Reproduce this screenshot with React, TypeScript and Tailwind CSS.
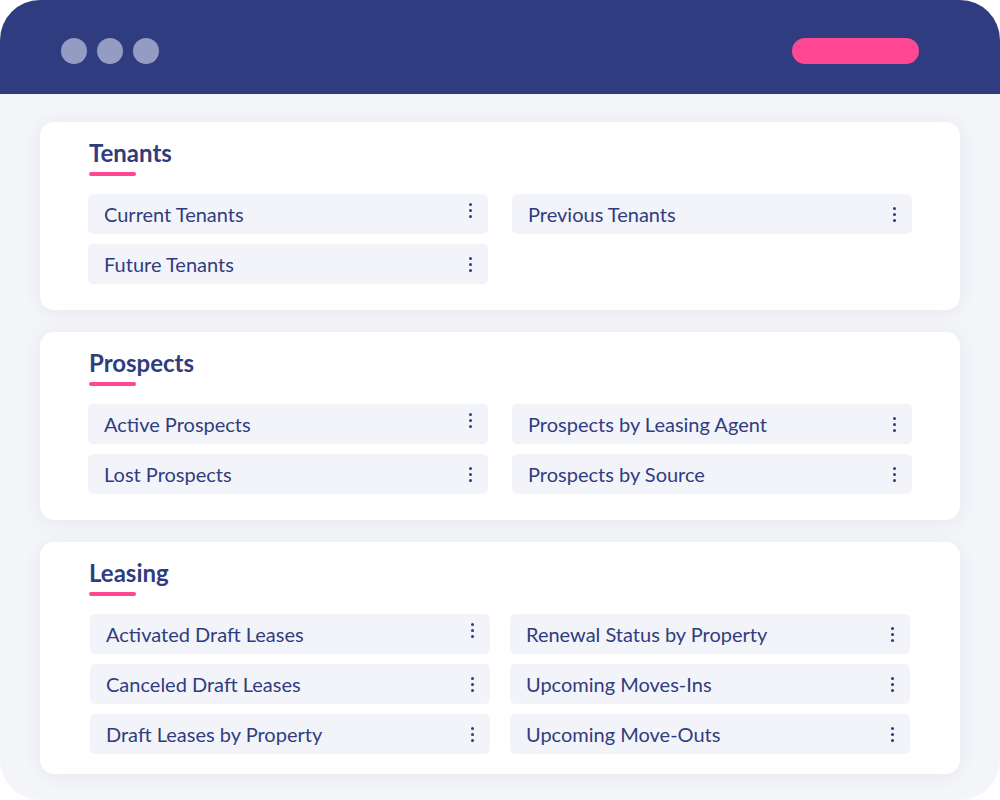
import React from "react";

type Item = { label: string; raised?: boolean };

function Kebab({ raised }: { raised?: boolean }) {
  return (
    <div className={`flex flex-col items-center gap-[3px] ${raised ? "-translate-y-[4px]" : ""}`}>
      <span className="block w-[3px] h-[3px] rounded-full bg-[#2f3d80]" />
      <span className="block w-[3px] h-[3px] rounded-full bg-[#2f3d80]" />
      <span className="block w-[3px] h-[3px] rounded-full bg-[#2f3d80]" />
    </div>
  );
}

function Row({ item }: { item: Item }) {
  return (
    <div className="h-[40px] rounded-[5px] bg-[#f3f4f9] flex items-center justify-between pl-4 pr-[16px]">
      <span className="text-[20px] leading-none text-[#2f3d80]">{item.label}</span>
      <Kebab raised={item.raised} />
    </div>
  );
}

function Card({
  title,
  left,
  right,
  padX,
  gapX,
  pb,
}: {
  title: string;
  left: Item[];
  right: Item[];
  padX: string;
  gapX: string;
  pb: string;
}) {
  return (
    <div className={`bg-white rounded-[14px] shadow-[0_2px_18px_rgba(40,50,110,0.07)] pt-[17px] ${pb}`}>
      <div className="pl-[49px]">
        <div className="text-[24px] leading-[28px] font-bold text-[#2f3d80]">{title}</div>
        <div className="mt-[5px] w-[47px] h-[4px] rounded-full bg-[#ff4894]" />
      </div>
      <div className={`mt-[18px] grid grid-cols-2 ${padX} ${gapX}`}>
        <div className="flex flex-col gap-[10px]">
          {left.map((it) => (
            <Row key={it.label} item={it} />
          ))}
        </div>
        <div className="flex flex-col gap-[10px]">
          {right.map((it) => (
            <Row key={it.label} item={it} />
          ))}
        </div>
      </div>
    </div>
  );
}

export default function App() {
  return (
    <div
      className="w-[1000px] h-[800px] bg-white"
      style={{ fontFamily: "Lato, 'Open Sans', sans-serif" }}
    >
      <div className="w-[1000px] h-[800px] rounded-[40px] overflow-hidden bg-[#f4f5f9] flex flex-col">
        <div className="h-[94px] bg-[#2f3d80] flex items-start justify-between pl-[61px] pr-[81px] pt-[38px] shrink-0">
          <div className="flex gap-[10px]">
            <span className="block w-[26px] h-[26px] rounded-full bg-[#959cc3]" />
            <span className="block w-[26px] h-[26px] rounded-full bg-[#959cc3]" />
            <span className="block w-[26px] h-[26px] rounded-full bg-[#959cc3]" />
          </div>
          <div className="w-[127px] h-[26px] rounded-full bg-[#ff4894]" />
        </div>
        <div className="flex flex-col gap-[22px] px-10 pt-[28px]">
          <Card
            title="Tenants"
            padX="px-[48px]"
            gapX="gap-x-[24px]"
            pb="pb-[26px]"
            left={[{ label: "Current Tenants", raised: true }, { label: "Future Tenants" }]}
            right={[{ label: "Previous Tenants" }]}
          />
          <Card
            title="Prospects"
            padX="px-[48px]"
            gapX="gap-x-[24px]"
            pb="pb-[26px]"
            left={[{ label: "Active Prospects", raised: true }, { label: "Lost Prospects" }]}
            right={[{ label: "Prospects by Leasing Agent" }, { label: "Prospects by Source" }]}
          />
          <Card
            title="Leasing"
            padX="px-[50px]"
            gapX="gap-x-[20px]"
            pb="pb-[20px]"
            left={[
              { label: "Activated Draft Leases", raised: true },
              { label: "Canceled Draft Leases" },
              { label: "Draft Leases by Property" },
            ]}
            right={[
              { label: "Renewal Status by Property" },
              { label: "Upcoming Moves-Ins" },
              { label: "Upcoming Move-Outs" },
            ]}
          />
        </div>
      </div>
    </div>
  );
}
